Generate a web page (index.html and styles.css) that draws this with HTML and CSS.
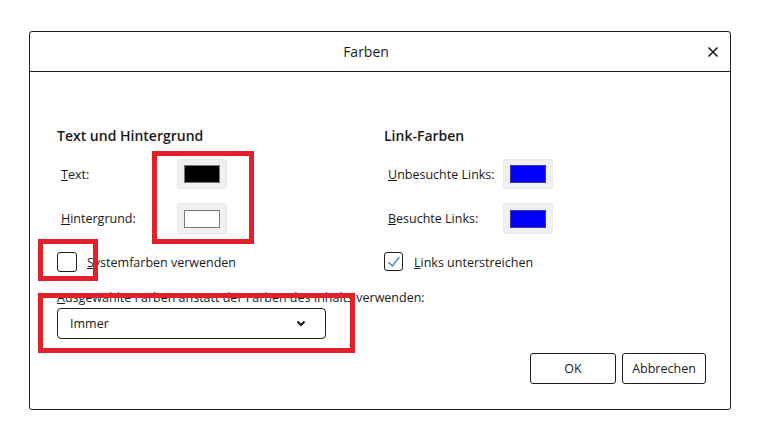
FILE: index.html
```html
<!DOCTYPE html>
<html lang="de">
<head>
<meta charset="utf-8">
<title>Farben</title>
<link rel="stylesheet" href="styles.css">
</head>
<body>
<div class="dialog">
  <div class="header">
    <span class="title">Farben</span>
    <span class="close-wrap">
      <svg class="close" width="12" height="12" viewBox="0 0 12 12"><path d="M1.5 1.5 L10.5 10.5 M10.5 1.5 L1.5 10.5" stroke="#1a1a1a" stroke-width="1.6" fill="none"/></svg>
    </span>
  </div>
  <div class="content">
    <div class="cols">
      <div class="col">
        <div class="heading">Text und Hintergrund</div>
        <div class="row">
          <span class="label"><u>T</u>ext:</span>
          <span class="swatch-btn"><span class="swatch black"></span></span>
        </div>
        <div class="row">
          <span class="label"><u>H</u>intergrund:</span>
          <span class="swatch-btn"><span class="swatch white"></span></span>
        </div>
        <div class="check-row">
          <span class="checkbox"></span>
          <span class="check-label"><u>S</u>ystemfarben verwenden</span>
        </div>
      </div>
      <div class="col">
        <div class="heading">Link-Farben</div>
        <div class="row">
          <span class="label label-r"><u>U</u>nbesuchte Links:</span>
          <span class="swatch-btn"><span class="swatch blue"></span></span>
        </div>
        <div class="row">
          <span class="label label-r"><u>B</u>esuchte Links:</span>
          <span class="swatch-btn"><span class="swatch blue"></span></span>
        </div>
        <div class="check-row">
          <span class="checkbox checked">
            <svg width="14" height="14" viewBox="0 0 14 14"><path d="M2 7.6 L5.4 11 L12 2.6" stroke="#3c8fd6" stroke-width="1.5" fill="none" stroke-linecap="round" stroke-linejoin="round"/></svg>
          </span>
          <span class="check-label"><u>L</u>inks unterstreichen</span>
        </div>
      </div>
    </div>
    <div class="select-label"><u>A</u>usgewählte Farben anstatt der Farben des Inhalts verwenden:</div>
    <div class="select">
      <span>Immer</span>
      <svg width="10" height="7" viewBox="0 0 10 7"><path d="M1.5 1.5 L5 5 L8.5 1.5" stroke="#1a1a1a" stroke-width="2" fill="none"/></svg>
    </div>
    <div class="footer">
      <span class="btn btn-ok">OK</span>
      <span class="btn btn-cancel">Abbrechen</span>
    </div>
  </div>
</div>
<div class="mark mark-swatches"></div>
<div class="mark mark-check"></div>
<div class="mark mark-select"></div>
</body>
</html>
```
FILE: styles.css
```css
html, body {
  margin: 0;
  padding: 0;
  background: #ffffff;
}
body {
  font-family: "Open Sans", "Noto Sans", sans-serif;
  font-size: 12.5px;
  color: #1a1a1a;
  position: relative;
  width: 764px;
  height: 436px;
  overflow: hidden;
}
.dialog {
  position: relative;
  margin: 31px 0 0 29px;
  width: 700px;
  height: 377px;
  border: 1px solid #1f1f1f;
  border-radius: 3px;
  display: flex;
  flex-direction: column;
}
.header {
  height: 39px;
  border-bottom: 1px solid #1f1f1f;
  display: flex;
  align-items: center;
}
.title {
  flex: 1;
  text-align: center;
  font-size: 14px;
  font-weight: 500;
}
.close-wrap {
  width: 28px;
  display: flex;
  justify-content: flex-end;
  padding-right: 11px;
  box-sizing: border-box;
}
.close { display: block; }
.content {
  padding: 53px 24px 0 27px;
  display: flex;
  flex-direction: column;
}
.cols {
  display: grid;
  grid-template-columns: 327px 1fr;
}
.col {
  display: flex;
  flex-direction: column;
}
.heading {
  font-size: 14px;
  font-weight: 600;
  height: 21px;
  line-height: 21px;
  margin-bottom: 13px;
}
.row {
  display: flex;
  align-items: center;
  height: 30px;
  margin-bottom: 14px;
}
.row + .row { height: 31px; }
.label {
  width: 120px;
  padding-left: 4px;
  box-sizing: border-box;
}
.label-r { width: 119px; }
.swatch-btn {
  width: 50px;
  height: 100%;
  box-sizing: border-box;
  background: #f0f0f0;
  border: 1px solid #e8e8e8;
  border-radius: 3px;
  display: flex;
  align-items: center;
  justify-content: center;
}
.swatch {
  width: 36px;
  height: 18px;
  box-sizing: border-box;
  border: 1px solid #7a7a7a;
}
.black { background: #000000; }
.white { background: #ffffff; }
.blue { background: #0000ff; border-color: #3a3a9a; }
.check-row {
  display: flex;
  align-items: center;
  margin-top: 3px;
  height: 21px;
}
.check-label { padding-top: 2px; }
.checkbox {
  width: 20px;
  height: 20px;
  box-sizing: border-box;
  border: 1.5px solid #1f1f1f;
  border-radius: 3px;
  margin-right: 10px;
  display: flex;
  align-items: center;
  justify-content: center;
}
.checkbox.checked { width: 19px; height: 19px; margin-right: 11px; }
.select-label {
  margin-top: 17px;
  line-height: 18px;
  height: 18px;
}
.select {
  margin-top: 1px;
  width: 269px;
  height: 31px;
  box-sizing: border-box;
  border: 1px solid #1f1f1f;
  border-radius: 4px;
  padding: 0 19px 0 12px;
  display: flex;
  align-items: center;
  justify-content: space-between;
}
.footer {
  margin-top: 14px;
  display: flex;
  justify-content: flex-end;
  gap: 6px;
}
.btn {
  height: 31px;
  box-sizing: border-box;
  border: 1px solid #1f1f1f;
  border-radius: 3px;
  display: flex;
  align-items: center;
  justify-content: center;
}
.btn-ok { width: 86px; }
.btn-cancel { width: 84px; }
.mark {
  position: absolute;
  border: 5px solid #e3202a;
  box-sizing: border-box;
}
.mark-swatches { left: 152px; top: 151px; width: 102px; height: 93px; }
.mark-check { left: 38px; top: 239px; width: 60px; height: 42px; }
.mark-select { left: 38px; top: 293px; width: 317px; height: 60px; }
```
